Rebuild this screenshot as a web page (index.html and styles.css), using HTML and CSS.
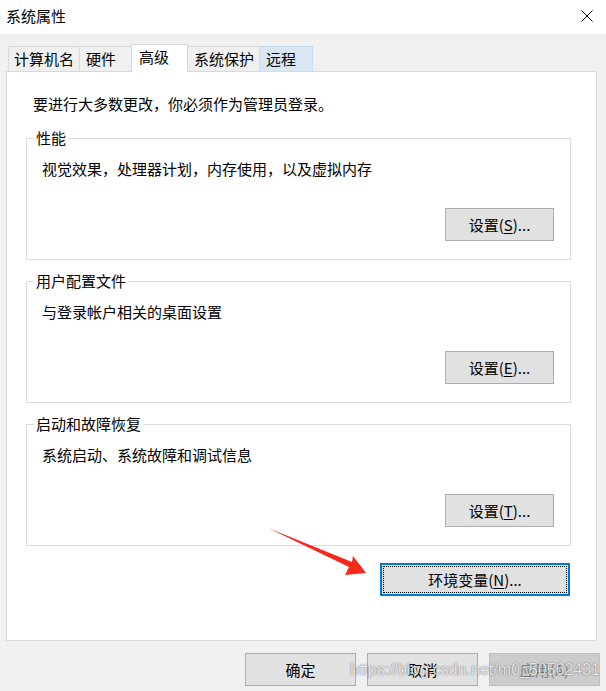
FILE: index.html
```html
<!DOCTYPE html>
<html lang="zh-CN">
<head>
    <meta charset="UTF-8">
    <meta name="viewport" content="width=device-width, initial-scale=1.0">
    <title>系统属性</title>
    <link rel="stylesheet" href="styles.css">
</head>
<body>
    <div class="window">
        <div class="titlebar">
            <span class="title">系统属性</span>
            <svg class="close" width="12" height="12" viewBox="0 0 12 12">
                <path d="M0.5 0.5 L11.5 11.5 M11.5 0.5 L0.5 11.5" stroke="#000" stroke-width="1" fill="none"/>
            </svg>
        </div>

        <div class="content">
            <div class="tabs">
                <div class="tab">计算机名</div>
                <div class="tab">硬件</div>
                <div class="tab active">高级</div>
                <div class="tab">系统保护</div>
                <div class="tab hover">远程</div>
            </div>

            <div class="panel">
                <p class="intro">要进行大多数更改，你必须作为管理员登录。</p>

                <fieldset class="group">
                    <legend>性能</legend>
                    <p class="desc">视觉效果，处理器计划，内存使用，以及虚拟内存</p>
                    <div class="group-actions">
                        <button class="btn">设置(<u>S</u>)...</button>
                    </div>
                </fieldset>

                <fieldset class="group">
                    <legend>用户配置文件</legend>
                    <p class="desc">与登录帐户相关的桌面设置</p>
                    <div class="group-actions">
                        <button class="btn">设置(<u>E</u>)...</button>
                    </div>
                </fieldset>

                <fieldset class="group">
                    <legend>启动和故障恢复</legend>
                    <p class="desc">系统启动、系统故障和调试信息</p>
                    <div class="group-actions">
                        <button class="btn">设置(<u>T</u>)...</button>
                    </div>
                </fieldset>

                <div class="env-row">
                    <button class="btn btn-env">环境变量(<u>N</u>)...</button>
                </div>
            </div>

            <div class="footer">
                <button class="btn btn-footer">确定</button>
                <button class="btn btn-footer">取消</button>
                <button class="btn btn-footer" disabled>应用(A)</button>
            </div>
        </div>

        <!-- annotation layer from the original screenshot -->
        <svg class="arrow" width="606" height="691" viewBox="0 0 606 691">
            <polygon points="268,528 352,562 353,556 366,573 345,575 349,567" fill="#f62a1b"/>
        </svg>
        <div class="watermark">https://blog.csdn.net/m0_50562431</div>
    </div>
</body>
</html>
```

FILE: styles.css
```css
* {
    margin: 0;
    padding: 0;
    box-sizing: border-box;
}

body {
    font-family: "Noto Sans CJK SC", "Noto Sans", sans-serif;
    font-size: 15px;
    line-height: 20px;
    color: #000;
    background: #f0f0f0;
}

.window {
    position: relative;
    width: 606px;
    height: 691px;
    background: #f0f0f0;
    overflow: hidden;
}

/* Title bar */
.titlebar {
    height: 34px;
    background: #fff;
    display: flex;
    align-items: center;
    justify-content: space-between;
    padding: 0 13px 3px 6px;
}

.title {
    font-size: 15px;
}

/* Tabs */
.content {
    padding: 0 6px;
}

.tabs {
    display: flex;
    align-items: flex-start;
    height: 25px;
    margin-top: 12px;
    padding-left: 2px;
}

.tab {
    height: 25px;
    min-width: 54px;
    padding: 1px 5px 0 6px;
    border: 1px solid #d9d9d9;
    border-bottom: none;
    background: #f0f0f0;
    margin-left: -1px;
    line-height: 22px;
}

.tab:first-child {
    margin-left: 0;
    padding-left: 5px;
}

.tab.active {
    position: relative;
    z-index: 1;
    height: 28px;
    min-width: 57px;
    margin-top: -2px;
    margin-left: -2px;
    padding-left: 7px;
    background: #fff;
    line-height: 22px;
}

.tab.hover {
    background: #d9e7f5;
    border-color: #c9dcee;
}

/* Main panel */
.panel {
    width: 591px;
    height: 570px;
    background: #fff;
    border: 1px solid #d9d9d9;
}

.intro {
    margin: 22px 0 14px 26px;
}

.group {
    margin: 0 25px 0 19px;
    border: 1px solid #dcdcdc;
    padding: 0;
    min-width: 0;
}

.group + .group {
    margin-top: 11px;
}

.group legend {
    margin-left: 7px;
    padding: 0 2px;
    line-height: 20px;
}

.desc {
    margin: 11px 0 0 15px;
}

.group-actions {
    display: flex;
    justify-content: flex-end;
    margin: 29px 16px 18px 0;
}

/* Buttons */
.btn {
    font-family: "Noto Sans CJK SC", "Noto Sans", sans-serif;
    font-size: 15px;
    line-height: 20px;
    color: #000;
    background: #e1e1e1;
    border: 1px solid #adadad;
    width: 109px;
    height: 33px;
    cursor: pointer;
}

.btn u {
    text-underline-offset: 2px;
}

.env-row {
    display: flex;
    justify-content: flex-end;
    margin: 17px 26px 0 0;
}

.btn-env {
    width: 190px;
    border: 2px solid #0078d7;
    outline: 1px dotted #000;
    outline-offset: -4px;
}

.footer {
    display: flex;
    justify-content: flex-end;
    gap: 11px;
    margin-top: 12px;
}

.btn-footer {
    width: 111px;
}

.btn:disabled {
    background: #cccccc;
    border-color: #bfbfbf;
    color: #838383;
    cursor: default;
}

/* Screenshot annotations */
.arrow {
    position: absolute;
    left: 0;
    top: 0;
    pointer-events: none;
}

.watermark {
    position: absolute;
    left: 350px;
    top: 660px;
    font-family: "Liberation Sans", Arial, sans-serif;
    font-size: 16px;
    line-height: 20px;
    color: rgba(255, 255, 255, 0.85);
    text-shadow: 0 0 1px rgba(0, 0, 0, 0.55), 0 0 2px rgba(0, 0, 0, 0.2);
    pointer-events: none;
    white-space: nowrap;
}
```
